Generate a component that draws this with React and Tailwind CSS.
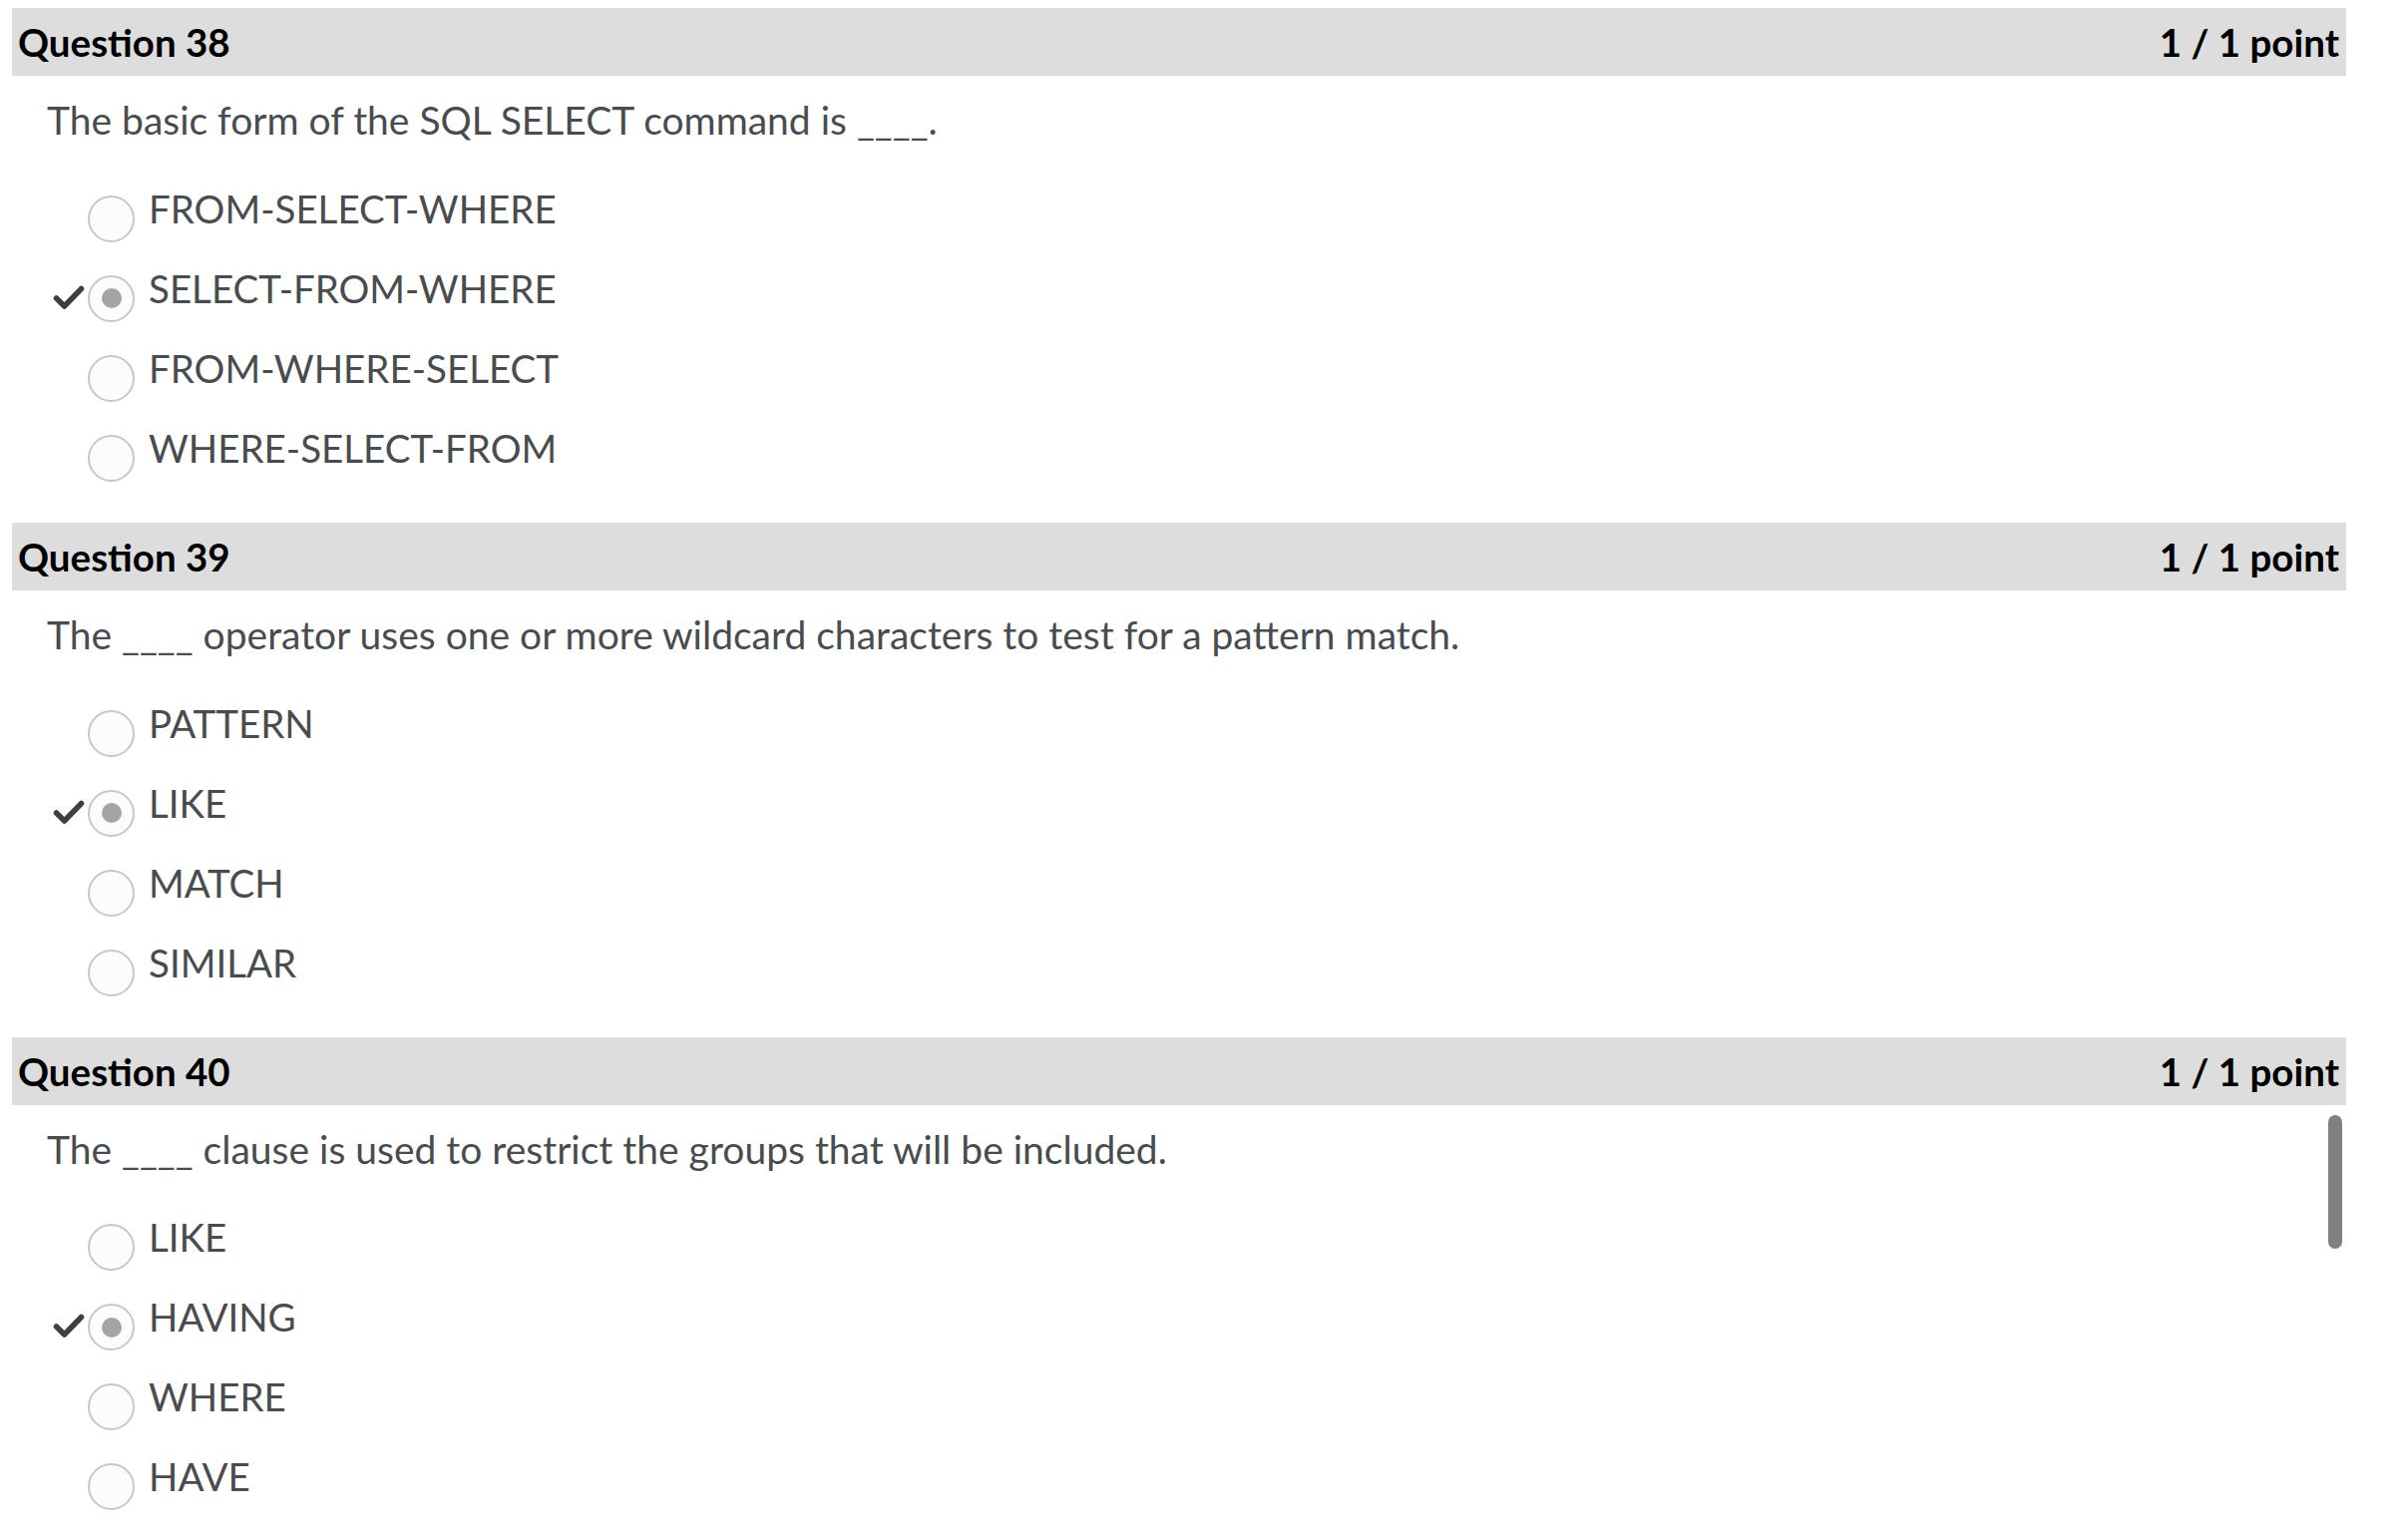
import React from "react";

const questions = [
  {
    n: 38,
    text: "The basic form of the SQL SELECT command is ____.",
    options: ["FROM-SELECT-WHERE", "SELECT-FROM-WHERE", "FROM-WHERE-SELECT", "WHERE-SELECT-FROM"],
    correct: 1,
  },
  {
    n: 39,
    text: "The ____ operator uses one or more wildcard characters to test for a pattern match.",
    options: ["PATTERN", "LIKE", "MATCH", "SIMILAR"],
    correct: 1,
  },
  {
    n: 40,
    text: "The ____ clause is used to restrict the groups that will be included.",
    options: ["LIKE", "HAVING", "WHERE", "HAVE"],
    correct: 1,
  },
];

function Check() {
  return (
    <svg width="32" height="26" viewBox="0 0 32 26" fill="none">
      <polyline
        points="3.5,14 11.5,22 28.5,4.5"
        stroke="#3d3f41"
        strokeWidth="5.5"
        strokeLinecap="round"
        strokeLinejoin="round"
      />
    </svg>
  );
}

function Option({ label, selected }) {
  return (
    <div className="flex h-[80px] items-start">
      <div className="flex w-[41px] justify-end pr-[3px] pt-[19px]">
        {selected ? <Check /> : null}
      </div>
      <div className="mt-[10px] flex h-[47px] w-[47px] shrink-0 items-center justify-center rounded-full border-2 border-[#c5c7c9] bg-[#fbfcfd]">
        {selected ? <div className="h-[20px] w-[20px] rounded-full bg-[#a3a4a6]" /> : null}
      </div>
      <div className="ml-[14px] text-[38.5px] leading-[1.2] text-[#494c4e]">{label}</div>
    </div>
  );
}

function Question({ q }) {
  return (
    <div className="mb-[18px]">
      <div className="flex h-[68px] items-center justify-between bg-[#dddddd] pl-[6px] pr-[7px] text-[38.5px] font-bold leading-[1.2] text-black">
        <span>Question {q.n}</span>
        <span>1 / 1 point</span>
      </div>
      <div className="pl-[35px] pt-[21px] text-[39px] leading-[1.2] text-[#494c4e]">{q.text}</div>
      <div className="mt-[42px] pl-[35px]">
        {q.options.map((o, i) => (
          <Option key={o} label={o} selected={i === q.correct} />
        ))}
      </div>
    </div>
  );
}

export default function App() {
  return (
    <div
      className="relative h-[1544px] w-[2406px] overflow-hidden bg-white pl-[12px] pt-[8px]"
      style={{ fontFamily: 'Lato, "Noto Sans", "Open Sans", sans-serif' }}
    >
      <div className="w-[2340px]">
        {questions.map((q) => (
          <Question key={q.n} q={q} />
        ))}
      </div>
      <div className="absolute left-[2334px] top-[1118px] h-[134px] w-[14px] rounded-full bg-[#808080]" />
    </div>
  );
}
